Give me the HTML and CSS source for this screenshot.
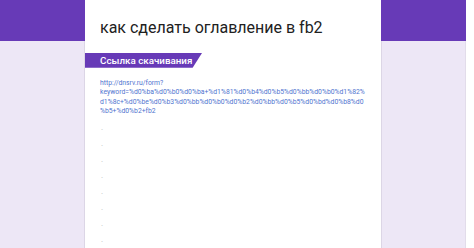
FILE: index.html
```html
<!DOCTYPE html>
<html lang="ru">
<head>
<meta charset="utf-8">
<link rel="stylesheet" href="styles.css">
</head>
<body>
<div class="page">
  <div class="side"><div class="band"></div><div class="fill"></div></div>
  <main class="card">
    <h1 class="title">как сделать оглавление в fb2</h1>
    <div class="banner"><span>Ссылка скачивания</span></div>
    <p class="link">http://dnsrv.ru/form?<br>keyword=%d0%ba%d0%b0%d0%ba+%d1%81%d0%b4%d0%b5%d0%bb%d0%b0%d1%82%<br>d1%8c+%d0%be%d0%b3%d0%bb%d0%b0%d0%b2%d0%bb%d0%b5%d0%bd%d0%b8%d0<br>%b5+%d0%b2+fb2</p>
    <ul class="dots">
      <li>.</li><li>.</li><li>.</li><li>.</li><li>.</li><li>.</li><li>.</li><li>.</li>
    </ul>
  </main>
  <div class="side right"><div class="band"></div><div class="fill"></div></div>
  <div class="edge"></div>
</div>
</body>
</html>
```
FILE: styles.css
```css
html, body { margin: 0; padding: 0; background: #fff; }
body { font-family: Roboto, "Noto Sans", sans-serif; width: 474px; height: 248px; overflow: hidden; }
.page { display: flex; height: 248px; overflow: hidden; }
.side { width: 85px; display: flex; flex-direction: column; }
.band { height: 41px; background: #673ab7; }
.fill { flex: 1; background: #ede7f6; }
.side:not(.right) .fill { box-shadow: inset -1px 0 0 #dcd6e6; }
.side.right .fill { box-shadow: inset 1px 0 0 #dcd6e6, inset -1px 0 0 #e2dcea; }
.edge { width: 8px; background: #fff; }
.card { width: 296px; background: #fff; display: flex; flex-direction: column; }
.title { margin: 18px 0 0 15px; font-size: 16px; font-weight: 400; color: #212121; line-height: 20px; height: 20px; white-space: nowrap; }
.banner { margin-top: 15px; width: 117px; height: 21px; background: #673ab7; clip-path: polygon(0 0, 100% 0, 92% 100%, 0 100%); display: flex; align-items: center; padding-left: 15px; box-sizing: border-box; }
.banner span { color: #fff; font-size: 9.8px; font-weight: 500; white-space: nowrap; }
.link { margin: 11px 0 0 15px; font-size: 6.8px; line-height: 9.6px; color: #4f74cf; white-space: nowrap; }
.dots { list-style: none; margin: 3px 0 0 16px; padding: 0; }
.dots li { height: 16px; font-size: 8px; line-height: 16px; color: #bdbdbd; }
```
